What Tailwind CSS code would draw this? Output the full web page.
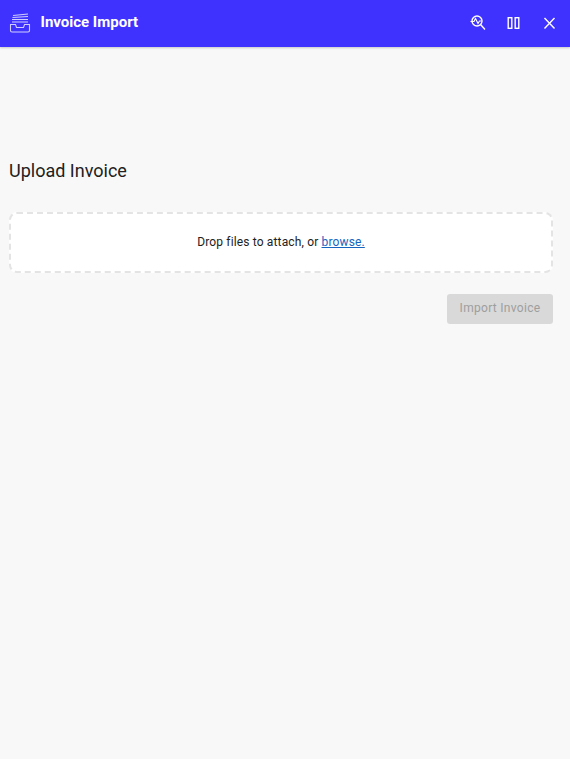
<!DOCTYPE html>
<html lang="en">

<head>
    <meta charset="UTF-8">
    <meta name="viewport" content="width=device-width, initial-scale=1">
    <title>Invoice Import</title>
    <script src="https://cdn.jsdelivr.net/npm/@tailwindcss/browser@4"></script>
</head>

<body class="bg-[#f8f8f8] font-[Roboto,sans-serif]">
    <div class="flex h-[759px] flex-col">
        <header class="flex h-[47px] items-center justify-between bg-[#3f32ff] pb-[2px] pl-[9px] pr-[12px] shadow-[0_1px_2px_rgba(0,0,0,0.2)]">
            <div class="flex items-center gap-[9.5px]">
                <svg class="h-[22px] w-[22px]" viewBox="0 0 22 22" fill="none" stroke="#d0cdff" stroke-width="1.100">
                    <path d="M4 3.500 19 2M3.500 5.500l15.500-1M3 7.500h16M3 10h16" />
                    <path d="M1.500 12.500h5l1 3h7l1-3h5v6a1.500 1.500 0 0 1-1.500 1.500H3a1.500 1.500 0 0 1-1.500-1.500z" />
                </svg>
                <span class="text-[15px] font-bold leading-none text-white">Invoice Import</span>
            </div>
            <div class="flex items-center gap-[18px]">
                <svg class="h-[18px] w-[18px]" viewBox="0 0 18 18" fill="none" stroke="white" stroke-width="1.400">
                    <circle cx="9" cy="7" r="5" />
                    <path d="m12.500 10.500 4.500 5" />
                    <path stroke-width="1.100" d="M2.500 7.500h3.500l1.500-3 2.500 5 1.500-2.500h1.500" />
                </svg>
                <svg class="h-[18px] w-[18px]" viewBox="0 0 18 18" fill="none" stroke="white" stroke-width="1.400">
                    <rect x="4.200" y="3.700" width="3.600" height="10.600" />
                    <rect x="11.200" y="3.700" width="3.600" height="10.600" />
                </svg>
                <svg class="h-[18px] w-[18px]" viewBox="0 0 18 18" fill="none" stroke="white" stroke-width="1.400">
                    <path d="m4.500 4 10 10.500M14.500 4l-10 10.500" />
                </svg>
            </div>
        </header>
        <main class="flex flex-col px-[9px] pt-[112px] pr-[17px]">
            <h1 class="text-[18px] leading-[24px] text-[#212121]">Upload Invoice</h1>
            <div class="mt-[29px] flex h-[61px] items-center justify-center rounded-[8px] border-2 border-dashed border-[#e4e4e4] bg-white pb-[2px] text-[12px] tracking-[0.15px] text-[#212121]">
                <span>Drop files to attach, or <a href="#" class="text-[#1565c0] underline">browse.</a></span>
            </div>
            <div class="mt-[21px] flex justify-end">
                <button type="button" class="h-[30px] w-[106px] rounded-[3px] bg-[#d9d9d9] pb-[2px] text-[12px] tracking-[0.3px] text-[#9e9e9e]">Import Invoice</button>
            </div>
        </main>
    </div>
</body>

</html>
